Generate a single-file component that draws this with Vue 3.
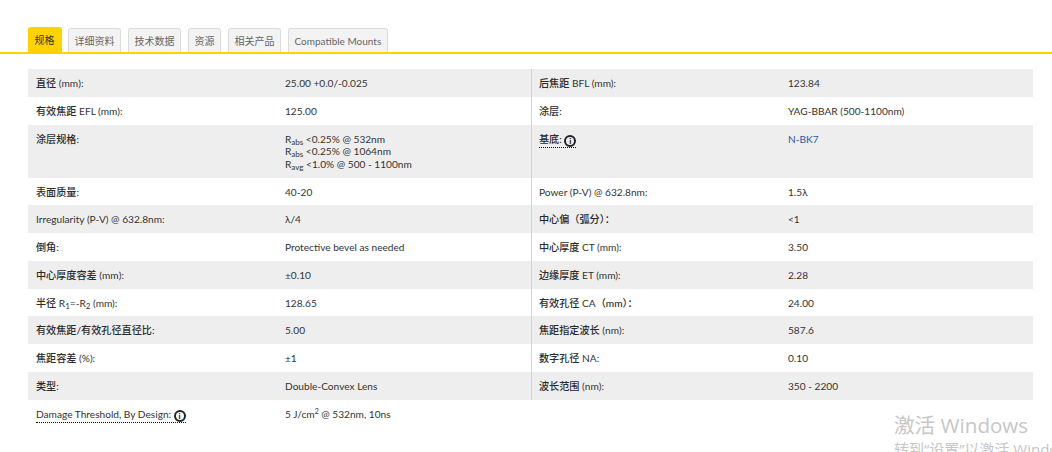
<script setup>
const tabs = ['规格', '详细资料', '技术数据', '资源', '相关产品', 'Compatible Mounts']
const rows = [
  { h: 'r28', l: '直径 <i>(mm):</i>', v: '25.00 +0.0/-0.025', l2: '后焦距 <i>BFL (mm):</i>', v2: '123.84' },
  { h: 'r28', l: '有效焦距 <i>EFL (mm):</i>', v: '125.00', l2: '涂层:', v2: 'YAG-BBAR (500-1100nm)' },
  { h: 'r53', l: '涂层规格:', v: 'R<sub>abs</sub> &lt;0.25% @ 532nm<br>R<sub>abs</sub> &lt;0.25% @ 1064nm<br>R<sub>avg</sub> &lt;1.0% @ 500 - 1100nm', l2: '<u>基底: <b>i</b></u>', v2: '<em>N-BK7</em>' },
  { h: 'r28', l: '表面质量:', v: '40-20', l2: '<i>Power (P-V) @ 632.8nm:</i>', v2: '1.5λ' },
  { h: 'r28', l: '<i>Irregularity (P-V) @ 632.8nm:</i>', v: 'λ/4', l2: '中心偏（弧分）：', v2: '&lt;1' },
  { h: 'r28', l: '倒角:', v: 'Protective bevel as needed', l2: '中心厚度 <i>CT (mm):</i>', v2: '3.50' },
  { h: 'r28', l: '中心厚度容差 <i>(mm):</i>', v: '±0.10', l2: '边缘厚度 <i>ET (mm):</i>', v2: '2.28' },
  { h: 'r28', l: '半径 <i>R<sub>1</sub>=-R<sub>2</sub> (mm):</i>', v: '128.65', l2: '有效孔径 <i>CA</i>（mm）：', v2: '24.00' },
  { h: 'r28', l: '有效焦距/有效孔径直径比:', v: '5.00', l2: '焦距指定波长 <i>(nm):</i>', v2: '587.6' },
  { h: 'r28', l: '焦距容差 <i>(%):</i>', v: '±1', l2: '数字孔径 <i>NA:</i>', v2: '0.10' },
  { h: 'r28', l: '类型:', v: 'Double-Convex Lens', l2: '波长范围 <i>(nm):</i>', v2: '350 - 2200' },
  { h: 'r28', l: '<u><i>Damage Threshold, By Design:</i> <b>i</b></u>', v: '5 J/cm<sup>2</sup> @ 532nm, 10ns', l2: '', v2: '', last: true }
]
</script>

<template>
  <div class="page">
    <nav class="tabs">
      <span v-for="(t, i) in tabs" :key="t" class="tab" :class="{ active: i === 0 }">{{ t }}</span>
    </nav>
    <section class="table">
      <div v-for="(r, i) in rows" :key="i" class="row" :class="[r.h, { odd: i % 2 === 0, last: r.last }]">
        <div class="half left">
          <div class="label" v-html="r.l"></div>
          <div class="value" v-html="r.v"></div>
        </div>
        <div class="half right">
          <div class="label" v-html="r.l2"></div>
          <div class="value" v-html="r.v2"></div>
        </div>
      </div>
    </section>
    <div class="watermark">
      <div class="wm1">激活 Windows</div>
      <div class="wm2">转到“设置”以激活 Windows。</div>
    </div>
  </div>
</template>

<style scoped>
.page {
  position: relative;
  width: 1052px;
  height: 452px;
  overflow: hidden;
  background: #fff;
  font-family: Lato, "Noto Sans CJK SC", sans-serif;
  font-size: 10.15px;
  line-height: 12.5px;
  color: #333;
}
.tabs {
  display: flex;
  align-items: flex-end;
  gap: 7px;
  height: 52px;
  padding: 0 0 0 28px;
  border-bottom: 2px solid #ffd200;
}
.tab {
  box-sizing: border-box;
  height: 24px;
  padding: 6px 5.5px 0;
  background: #f3f3f3;
  border: 1px solid #dcdcdc;
  border-bottom: 0;
  border-radius: 3px 3px 0 0;
  font-size: 10px;
  color: #666;
  white-space: nowrap;
}
.tab.active {
  height: 25px;
  padding-right: 6.5px;
  margin-right: -1px;
  background: #ffd200;
  border-color: #ffd200;
  color: #333;
}
.table {
  margin: 15px 19px 0 28px;
}
.row {
  display: grid;
  grid-template-columns: 504px 1fr;
}
.r28 { height: 27.75px; }
.r53 { height: 53px; }
.odd { background: #eeeeee; }
.half {
  display: grid;
  grid-template-columns: 249px 1fr;
  padding: 8px 0 0 8px;
  box-sizing: border-box;
}
.half.left { border-right: 1px solid #d4d4d4; }
.half.right { padding-left: 7px; }
.last .half.left { border-right: 0; }
.label { color: #2b2b2b; font-weight: 500; }
.label :deep(i) { font-style: normal; color: #333; font-weight: 400; }
.label :deep(u) {
  text-decoration: none;
  border-bottom: 1px dotted #111;
  display: inline-block;
  line-height: 12px;
}
.label :deep(b) {
  display: inline-block;
  width: 8px;
  height: 8px;
  line-height: 8px;
  border: 2px solid #222;
  border-radius: 50%;
  text-align: center;
  font-size: 8px;
  font-weight: 900;
  color: #222;
  vertical-align: -1px;
}
.value :deep(sub), .label :deep(sub) {
  font-size: 8px;
  line-height: 0;
  vertical-align: -2px;
}
.value :deep(sup) {
  font-size: 7px;
  line-height: 0;
  vertical-align: 4px;
}
.value :deep(em) {
  font-style: normal;
  color: #2a5aa8;
  font-weight: 400;
}
.watermark {
  position: absolute;
  left: 894px;
  top: 412px;
  color: #c6c6c6;
  font-family: "Open Sans", "Noto Sans CJK SC", sans-serif;
  white-space: nowrap;
}
.wm1 { font-size: 20.6px; line-height: 26px; }
.wm2 { font-size: 15px; line-height: 20px; margin-top: 1px; }
</style>
